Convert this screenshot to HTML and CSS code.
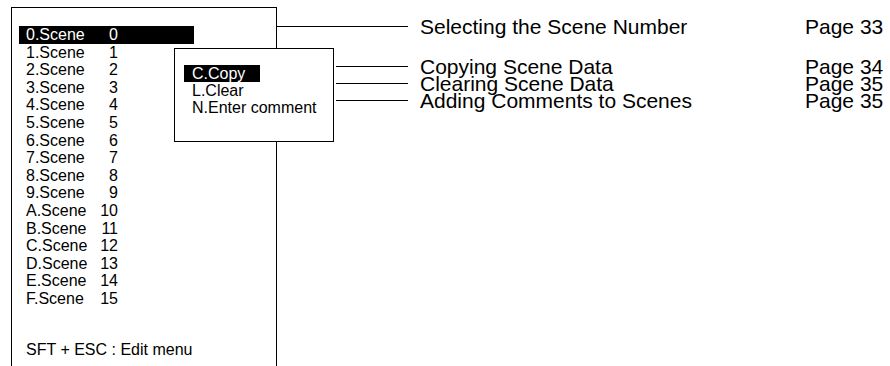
FILE: index.html
```html
<!DOCTYPE html>
<html lang="en">
<head>
    <meta charset="UTF-8">
    <meta name="viewport" content="width=device-width, initial-scale=1.0">
    <title>Scene Menu</title>
    <link rel="stylesheet" href="styles.css">
</head>
<body>
    <div class="page">
        <!-- scene list screen -->
        <div class="screen">
            <ul class="scene-list">
                <li class="scene selected"><span class="name">0.Scene</span><span class="num">0</span></li>
                <li class="scene"><span class="name">1.Scene</span><span class="num">1</span></li>
                <li class="scene"><span class="name">2.Scene</span><span class="num">2</span></li>
                <li class="scene"><span class="name">3.Scene</span><span class="num">3</span></li>
                <li class="scene"><span class="name">4.Scene</span><span class="num">4</span></li>
                <li class="scene"><span class="name">5.Scene</span><span class="num">5</span></li>
                <li class="scene"><span class="name">6.Scene</span><span class="num">6</span></li>
                <li class="scene"><span class="name">7.Scene</span><span class="num">7</span></li>
                <li class="scene"><span class="name">8.Scene</span><span class="num">8</span></li>
                <li class="scene"><span class="name">9.Scene</span><span class="num">9</span></li>
                <li class="scene"><span class="name">A.Scene</span><span class="num">10</span></li>
                <li class="scene"><span class="name">B.Scene</span><span class="num">11</span></li>
                <li class="scene"><span class="name">C.Scene</span><span class="num">12</span></li>
                <li class="scene"><span class="name">D.Scene</span><span class="num">13</span></li>
                <li class="scene"><span class="name">E.Scene</span><span class="num">14</span></li>
                <li class="scene"><span class="name">F.Scene</span><span class="num">15</span></li>
            </ul>
            <p class="hint">SFT + ESC : Edit menu</p>

            <!-- edit menu popup -->
            <ul class="popup">
                <li class="pop-item selected">C.Copy</li>
                <li class="pop-item">L.Clear</li>
                <li class="pop-item">N.Enter comment</li>
            </ul>
        </div>

        <!-- callouts -->
        <div class="callouts">
            <div class="callout first">
                <span class="lead"></span>
                <span class="label">Selecting the Scene Number</span>
                <span class="ref">Page 33</span>
            </div>
            <div class="callout sub">
                <span class="lead"></span>
                <span class="label">Copying Scene Data</span>
                <span class="ref">Page 34</span>
            </div>
            <div class="callout sub">
                <span class="lead"></span>
                <span class="label">Clearing Scene Data</span>
                <span class="ref">Page 35</span>
            </div>
            <div class="callout sub">
                <span class="lead"></span>
                <span class="label">Adding Comments to Scenes</span>
                <span class="ref">Page 35</span>
            </div>
        </div>
    </div>
</body>
</html>
```

FILE: styles.css
```css
body {
    font-family: "Liberation Sans", Arial, sans-serif;
    background-color: #fff;
    color: #000;
    margin: 0;
    padding: 0;
    overflow: hidden;
}

.page {
    display: flex;
    align-items: flex-start;
    height: 366px;
    overflow: hidden;
}

ul {
    list-style-type: none;
    margin: 0;
    padding: 0;
}

/* left screen panel */
.screen {
    position: relative;
    width: 264px;
    height: 400px;
    margin: 7px 0 0 11px;
    border: 1px solid #000;
    border-bottom: none;
    font-size: 16px;
}

.scene-list {
    padding-top: 18px;
}

.scene {
    display: flex;
    width: 175px;
    height: 17.6px;
    line-height: 17.6px;
    margin-left: 7px;
    padding-left: 7px;
    box-sizing: border-box;
    white-space: nowrap;
}

.scene .name {
    width: 73px;
}

.scene .num {
    width: 19px;
    text-align: right;
}

.selected {
    background-color: #000;
    color: #fff;
}

.hint {
    margin: 33px 0 0 14px;
    line-height: 17.6px;
}

/* edit menu popup */
.popup {
    position: absolute;
    left: 162px;
    top: 40px;
    width: 160px;
    height: 94px;
    padding: 16px 0 0 9px;
    box-sizing: border-box;
    background-color: #fff;
    border: 1px solid #000;
}

.pop-item {
    height: 17px;
    line-height: 17px;
    padding-left: 8px;
    white-space: nowrap;
}

.pop-item.selected {
    width: 76px;
    box-sizing: border-box;
}

/* callouts on the right */
.callouts {
    display: flex;
    flex-direction: column;
    margin-top: 18px;
    font-size: 21px;
}

.callout {
    display: flex;
    align-items: center;
    height: 17px;
    white-space: nowrap;
}

.callout.first {
    margin-bottom: 23px;
}

.lead {
    width: 131px;
    border-top: 1px solid #000;
}

.callout.sub .lead {
    width: 72px;
    margin-left: 59px;
}

.label {
    width: 385px;
    margin-left: 12px;
}
```
